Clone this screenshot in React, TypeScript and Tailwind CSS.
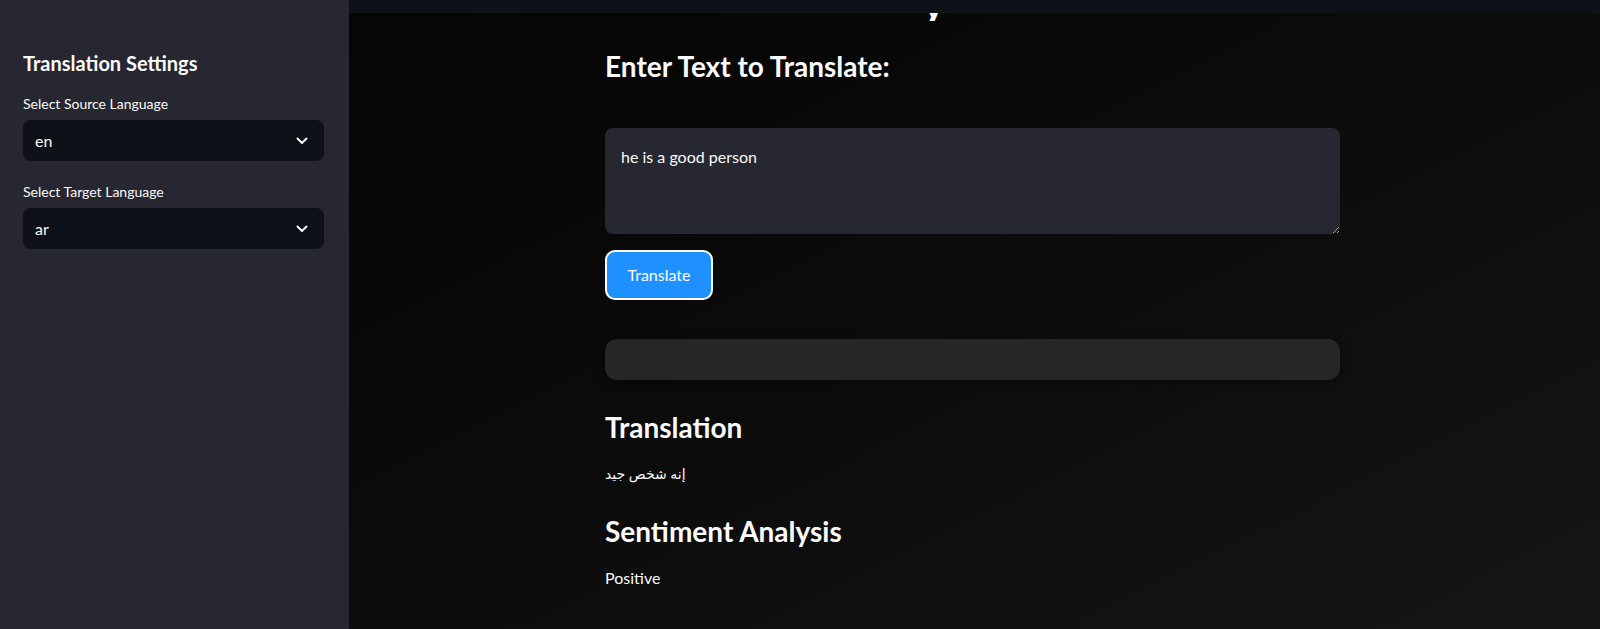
import React from 'react';

const font = { fontFamily: 'Lato, "DejaVu Sans", sans-serif' };

const SelectBox = ({ value }: { value: string }) => (
  <div className="flex h-[41px] items-center justify-between rounded-lg bg-[#0e1117] pl-3 pr-4 text-[16px] text-[#fafafa]">
    <span>{value}</span>
    <svg width="12" height="8" viewBox="0 0 12 8" fill="none">
      <path d="M1.5 1.5 6 6l4.5-4.5" stroke="#fafafa" strokeWidth="2" strokeLinecap="round" strokeLinejoin="round" />
    </svg>
  </div>
);

export default function App() {
  return (
    <div className="flex h-[629px] w-[1600px] overflow-hidden" style={font}>
      {/* Sidebar */}
      <aside className="w-[349px] shrink-0 bg-[#262730] px-[23px] pt-[49px]">
        <h2 className="text-[20px] font-bold leading-[28px] text-[#fafafa]">Translation Settings</h2>
        <div className="mt-[17px] text-[14px] leading-[20px] text-[#fafafa]">Select Source Language</div>
        <div className="mt-[6px] w-[301px]">
          <SelectBox value="en" />
        </div>
        <div className="mt-[21px] text-[14px] leading-[20px] text-[#fafafa]">Select Target Language</div>
        <div className="mt-[6px] w-[301px]">
          <SelectBox value="ar" />
        </div>
      </aside>

      {/* Main */}
      <main className="relative flex-1 bg-gradient-to-br from-[#050505] via-[#0c0c0c] to-[#161616]">
        <header className="relative h-[13px] bg-[#0e1117]">
          {/* title scrolled under the header: only the descender shows */}
          <span className="absolute left-[573px] top-[13px] block h-[8px] w-[16px] overflow-hidden">
            <span className="block -translate-y-[33px] text-[44px] font-bold leading-[44px] text-[#fafafa]">y</span>
          </span>
        </header>

        <div className="ml-[256px] w-[735px] text-[#fafafa]">
          <h3 className="mt-[35px] text-[28px] font-bold leading-[36px]">Enter Text to Translate:</h3>

          <textarea
            className="mt-[44px] block h-[106px] w-full resize-y rounded-lg bg-[#262730] px-4 pt-[17px] text-[16px] leading-[24px] text-[#fafafa] outline-none"
            style={font}
            defaultValue="he is a good person"
          />

          <button className="mt-[16px] h-[50px] w-[108px] rounded-[10px] border-2 border-white bg-[#1e90ff] text-[16px] text-white">
            Translate
          </button>

          <div className="mt-[39px] h-[41px] rounded-xl bg-[#262626] shadow-[0_2px_8px_rgba(0,0,0,0.5)]" />

          <h3 className="mt-[29px] text-[28px] font-bold leading-[36px]">Translation</h3>
          <p className="mt-[17px] text-[14px] leading-[24px]">إنه شخص جيد</p>

          <h3 className="mt-[27px] text-[28px] font-bold leading-[36px]">Sentiment Analysis</h3>
          <p className="mt-[17px] text-[16px] leading-[24px]">Positive</p>
        </div>
      </main>
    </div>
  );
}
